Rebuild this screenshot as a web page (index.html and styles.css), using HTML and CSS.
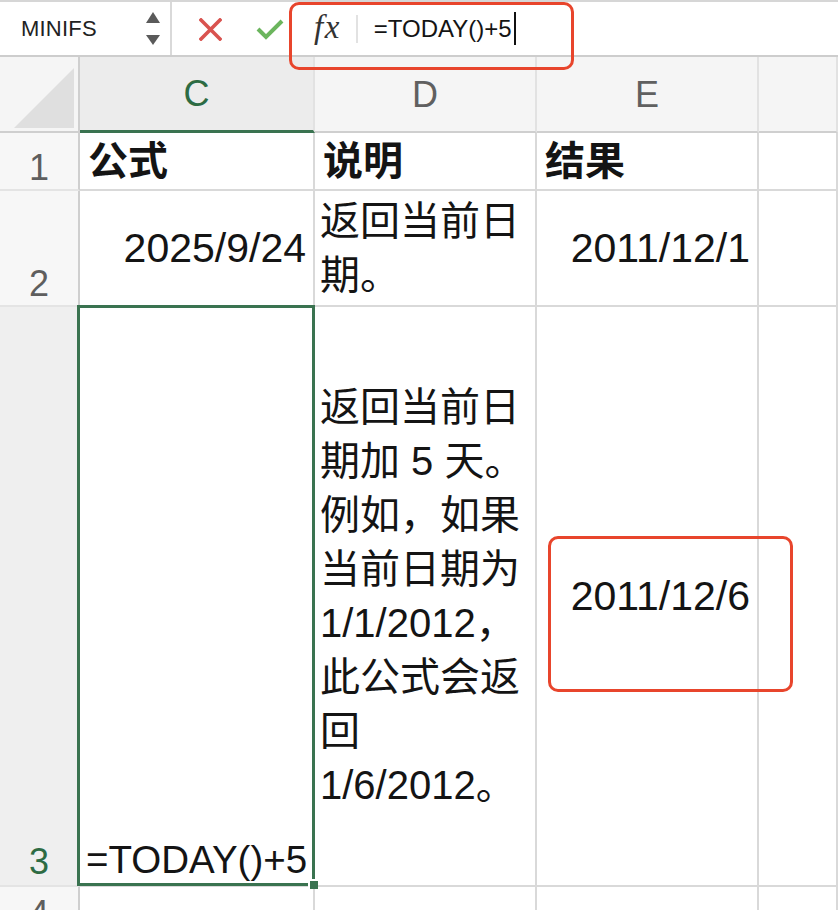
FILE: index.html
```html
<!DOCTYPE html>
<html lang="zh-CN">
<head>
<meta charset="utf-8">
<title>TODAY</title>
<link rel="stylesheet" href="styles.css">
</head>
<body>
<div class="app">
  <div class="toolbar">
    <div class="namebox">
      <span class="name">MINIFS</span>
      <svg class="spin" width="14" height="34" viewBox="0 0 14 34"><polygon points="7,0 14,11 0,11" fill="#5a5a5a"/><polygon points="0,23 14,23 7,33" fill="#5a5a5a"/></svg>
    </div>
    <div class="actions">
      <svg class="cancel" width="23" height="23" viewBox="0 0 23 23"><path d="M2 2 L21 21 M21 2 L2 21" stroke="#d9534f" stroke-width="3.6" stroke-linecap="square" fill="none"/></svg>
      <svg class="enter" width="28" height="22" viewBox="0 0 28 22"><path d="M2 11 L10 19 L26 3" stroke="#6bb55d" stroke-width="4" fill="none"/></svg>
    </div>
    <div class="formula">
      <span class="fx">fx</span>
      <span class="sep"></span>
      <span class="ftext">=TODAY()+5</span><span class="caret"></span>
    </div>
  </div>

  <div class="sheet">
    <div class="hd corner"><div class="tri"></div></div>
    <div class="hd col sel-col">C</div>
    <div class="hd col">D</div>
    <div class="hd col">E</div>
    <div class="hd col"></div>

    <div class="rh">1</div>
    <div class="cell bold">公式</div>
    <div class="cell bold">说明</div>
    <div class="cell bold">结果</div>
    <div class="cell"></div>

    <div class="rh">2</div>
    <div class="cell num">2025/9/24</div>
    <div class="cell wrap">返回当前日期。</div>
    <div class="cell num">2011/12/1</div>
    <div class="cell"></div>

    <div class="rh sel-row">3</div>
    <div class="cell active"><span class="edit">=TODAY()+5</span></div>
    <div class="cell wrap">返回当前日期加 5 天。例如，如果当前日期为 1/1/2012，此公式会返回 1/6/2012。</div>
    <div class="cell num">2011/12/6</div>
    <div class="cell"></div>

    <div class="rh">4</div>
    <div class="cell"></div>
    <div class="cell"></div>
    <div class="cell"></div>
    <div class="cell"></div>
  </div>

  <div class="mark mark-formula"></div>
  <div class="mark mark-result"></div>
</div>
</body>
</html>
```

FILE: styles.css
```css
html, body {
  margin: 0;
  padding: 0;
  background: #ffffff;
}

body {
  font-family: "Liberation Sans", "Noto Sans CJK SC", sans-serif;
  color: #141414;
}

.app {
  position: relative;
  width: 838px;
  height: 910px;
  overflow: hidden;
  background: #ffffff;
}

/* ---------- formula bar ---------- */
.toolbar {
  display: flex;
  align-items: center;
  height: 57px;
  box-sizing: border-box;
  border-top: 2px solid #d6d6d6;
  border-bottom: 2px solid #cdcdcd;
  background: #ffffff;
}

.namebox {
  width: 172px;
  height: 100%;
  box-sizing: border-box;
  border-right: 2px solid #d9d9d9;
  display: flex;
  align-items: center;
  justify-content: space-between;
  padding: 0 10px 0 21px;
}

.name {
  font-size: 22px;
  color: #222222;
  letter-spacing: 0.2px;
}

.spin {
  display: block;
  margin-top: 1px;
}

.actions {
  display: flex;
  align-items: center;
  gap: 34px;
  padding-left: 27px;
  width: 117px;
  box-sizing: border-box;
}

.cancel { display: block; margin-top: 2px; }
.enter { display: block; margin-top: 0; }

.formula {
  display: flex;
  align-items: center;
  height: 100%;
  padding-left: 25px;
}

.fx {
  font-family: "Liberation Serif", serif;
  font-style: italic;
  font-size: 33px;
  color: #333333;
  letter-spacing: 1.5px;
  margin-top: -3px;
}

.sep {
  width: 2px;
  height: 28px;
  background: #e2e2e2;
  margin-left: 15px;
  margin-right: 16px;
}

.ftext {
  font-size: 24px;
  color: #141414;
}

.caret {
  width: 2px;
  height: 33px;
  background: #111111;
  margin-left: 2px;
}

/* ---------- sheet ---------- */
.sheet {
  display: grid;
  grid-template-columns: 80px 235px 222px 222px 1fr;
  grid-template-rows: 76px 58px 116px 580px 50px;
}

.sheet > div {
  box-sizing: border-box;
  border-right: 2px solid #d9d9d9;
  border-bottom: 2px solid #d9d9d9;
  min-width: 0;
}

.hd {
  background: #f5f5f5;
  border-bottom-color: #cfcfcf !important;
}

.corner {
  display: flex;
  align-items: flex-end;
  justify-content: flex-end;
  padding: 0 4px 3px 0;
  border-right-color: #cfcfcf !important;
}

.tri {
  width: 60px;
  height: 60px;
  background: #dfdfdf;
  clip-path: polygon(100% 0, 100% 100%, 0 100%);
}

.col {
  display: flex;
  align-items: center;
  justify-content: center;
  font-size: 36px;
  color: #606060;
  padding-top: 1px;
  border-right-color: #e2e2e2 !important;
}

.sel-col {
  background: #ececec;
  color: #2d6b43;
  border-bottom: 3px solid #3a7350 !important;
}

.rh {
  background: #f7f7f7;
  border-right-color: #cfcfcf !important;
  border-bottom-color: #e4e4e4 !important;
  display: flex;
  align-items: flex-end;
  justify-content: center;
  font-size: 36px;
  line-height: 1.15;
  color: #5e5e5e;
  padding-bottom: 1px;
}

.sel-row {
  background: #efefef;
  color: #2d6b43;
  padding-bottom: 3px;
}

.cell {
  display: flex;
  align-items: center;
  font-size: 40px;
  line-height: 54px;
  padding: 0 5px 0 6px;
  background: #ffffff;
}

.bold {
  font-weight: 700;
  padding-left: 8px;
}

.num {
  justify-content: flex-end;
  padding-right: 7px;
  font-size: 41px;
}

.wrap {
  display: flex;
  align-items: center;
  padding-left: 5px;
  word-break: normal;
  line-break: strict;
}

.active {
  position: relative;
  align-items: flex-end;
  padding-left: 6px;
  padding-bottom: 3px;
  overflow: visible;
}

.edit {
  font-size: 38.5px;
  line-height: 44px;
}

.active::after {
  content: "";
  position: absolute;
  top: -2px;
  left: -3px;
  right: -2px;
  bottom: -1px;
  border: 3px solid #3a7350;
  pointer-events: none;
}

.active::before {
  content: "";
  position: absolute;
  right: -5px;
  bottom: -4px;
  width: 8px;
  height: 8px;
  background: #3a7350;
  border-left: 2px solid #ffffff;
  border-top: 2px solid #ffffff;
  z-index: 2;
}

/* ---------- annotations ---------- */
.mark {
  position: absolute;
  border: 3.5px solid #e8452c;
  border-radius: 10px;
  box-sizing: border-box;
  pointer-events: none;
}

.mark-formula {
  left: 289px;
  top: 2px;
  width: 285px;
  height: 68px;
}

.mark-result {
  left: 548px;
  top: 536px;
  width: 245px;
  height: 156px;
}
```
